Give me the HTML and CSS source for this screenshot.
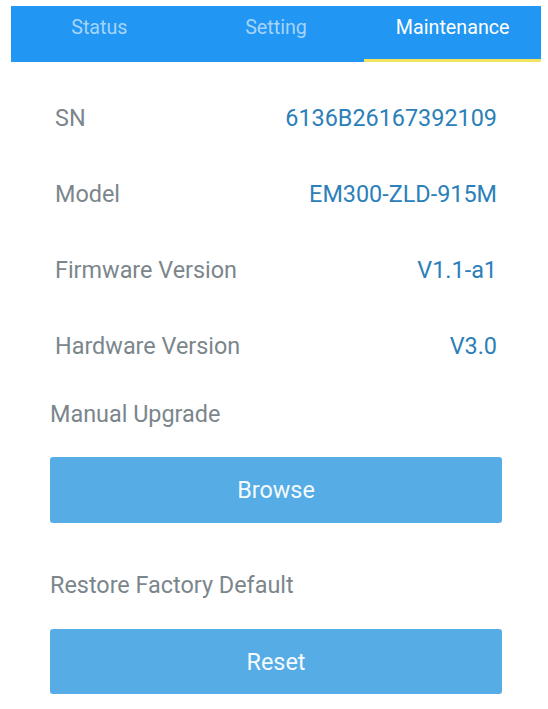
FILE: index.html
```html
<!DOCTYPE html>
<html lang="en">

<head>
    <title>Maintenance</title>
    <link rel="stylesheet" href="styles.css">
</head>

<body>
    <!-- top tabs -->
    <div class="tabs">
        <div class="tab">Status</div>
        <div class="tab">Setting</div>
        <div class="tab active">Maintenance</div>
    </div>

    <div class="content">
        <div class="row">
            <span class="label">SN</span>
            <span class="value">6136B26167392109</span>
        </div>
        <div class="row">
            <span class="label">Model</span>
            <span class="value">EM300-ZLD-915M</span>
        </div>
        <div class="row">
            <span class="label">Firmware Version</span>
            <span class="value">V1.1-a1</span>
        </div>
        <div class="row">
            <span class="label">Hardware Version</span>
            <span class="value">V3.0</span>
        </div>

        <div class="section-title upgrade">Manual Upgrade</div>
        <button class="action-btn browse">Browse</button>

        <div class="section-title restore">Restore Factory Default</div>
        <button class="action-btn reset">Reset</button>
    </div>
</body>

</html>
```

FILE: styles.css
```css
body {
    margin: 0;
    padding: 0;
    background: #fff;
    font-family: Roboto, "Noto Sans", sans-serif;
}

/* tab bar */
.tabs {
    display: flex;
    width: 530px;
    height: 56px;
    margin: 6px 0 0 11px;
    background-color: #2196f3;
}

.tab {
    flex: 1;
    display: flex;
    align-items: center;
    justify-content: center;
    font-size: 19.7px;
    color: rgba(255, 255, 255, 0.6);
    box-sizing: border-box;
    padding-bottom: 13px;
}

.tab.active {
    color: #fff;
    border-bottom: 3px solid #f2e460;
    padding-bottom: 10px;
}

/* info rows */
.content {
    padding: 18px 46px 0 50px;
}

.row {
    display: flex;
    justify-content: space-between;
    align-items: center;
    height: 76px;
    padding: 0 5px;
    font-size: 23.4px;
}

.label {
    color: #7b868c;
}

.value {
    color: #2b80b9;
}

.section-title {
    font-size: 23.4px;
    line-height: 30px;
    color: #7b868c;
}

.section-title.upgrade {
    margin-top: 15px;
}

.section-title.restore {
    margin-top: 47px;
}

.action-btn {
    display: block;
    width: 452px;
    height: 66px;
    border: none;
    border-radius: 3px;
    background-color: #56ace4;
    color: #f4faff;
    font-family: Roboto, "Noto Sans", sans-serif;
    font-size: 23.4px;
    padding: 0;
}

.action-btn.browse {
    margin-top: 28px;
}

.action-btn.reset {
    margin-top: 29px;
    height: 65px;
}
```
